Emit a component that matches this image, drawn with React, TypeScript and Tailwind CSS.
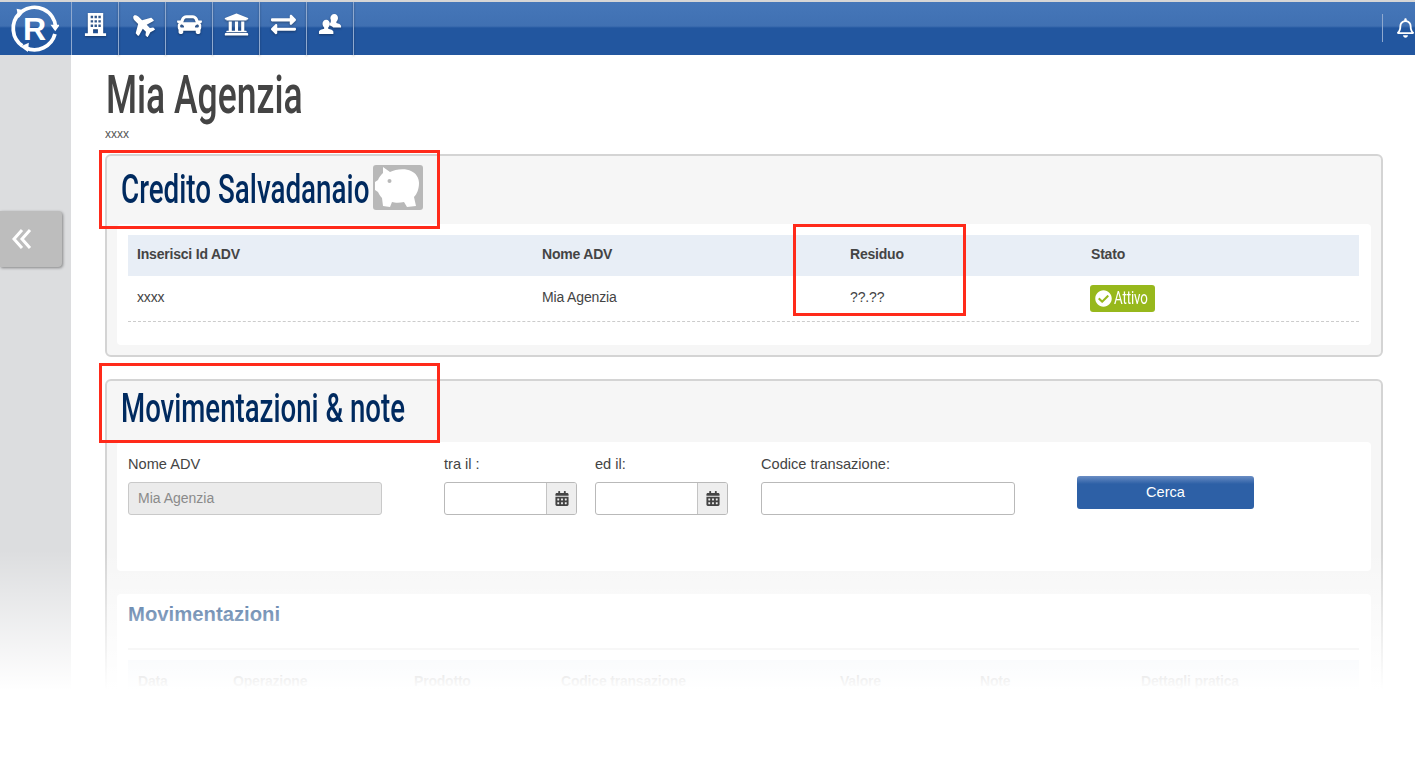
import { FaCalendarAlt, FaCar, FaCheckCircle, FaExchangeAlt, FaPlane, FaRegBell, FaUniversity } from "react-icons/fa";

const headingFont = "font-['Roboto',sans-serif] font-medium whitespace-nowrap inline-block origin-left";

function BuildingIcon() {
  return (
    <svg viewBox="0 0 26 26" className="w-[25px] h-[25px]" fill="currentColor">
      <path fillRule="evenodd" d="M5 1h16v21h3v3H2v-3h3zM8 4v2.500h2.500V4zm4 0v2.500h2.500V4zm4 0v2.500h2.500V4zM8 8.500V11h2.500V8.500zm4 0V11h2.500V8.500zm4 0V11h2.500V8.500zM8 13v2.500h2.500V13zm4 0v2.500h2.500V13zm4 0v2.500h2.500V13zm-5.500 5v4h5v-4z" />
    </svg>
  );
}

function UsersIcon() {
  return (
    <svg viewBox="0 0 26 26" className="w-[25px] h-[25px]" fill="currentColor">
      <path d="M17 2c2.300 0 3.800 1.900 3.800 4.300 0 1.600-.7 3-1.700 3.800v1.300c2 .6 4.900 1.400 4.900 3.100v1.500h-8.200c-.8-1.100-2.300-1.800-3.800-2.300v-1.300c.9-.8 1.400-1.900 1.400-3.300 0-1-.2-1.800-.6-2.600C13 3.700 14.700 2 17 2z" />
      <path d="M8.500 8c2.300 0 3.800 1.900 3.800 4.300 0 1.600-.7 3-1.700 3.800v1.300c2.200.6 5.400 1.400 5.400 3.100V23H1v-2.500c0-1.700 3.200-2.500 5.400-3.100v-1.300c-1-.8-1.700-2.200-1.700-3.800C4.700 9.900 6.200 8 8.500 8z" />
    </svg>
  );
}

function PiggyIcon() {
  return (
    <svg viewBox="0 0 50 45" className="w-[50px] h-[45px]">
      <rect width="50" height="45" rx="3" fill="#b8b8b8" />
      <path
        fill="#fff"
        d="M10 2l7 5c5-3 16-4 21-1 5 2 8 7 8 12 0 6-2 11-5 14l2 9-9 1-3-5c-4 1-9 1-12 0l-2 5-7-1-1-8c-2-2-3-4-4-6l-3-2v-8l3-2c1-3 3-5 5-7z"
      />
      <circle cx="16.500" cy="16" r="2" fill="#b8b8b8" />
    </svg>
  );
}

function Logo() {
  return (
    <svg viewBox="0 0 52 52" className="w-[49px] h-[49px]">
      <g fill="none" stroke="#fff" strokeWidth="4">
        <path d="M13.100 7.600A22.500 22.500 0 0 1 48.400 24" />
        <path d="M47.700 31.800A22.500 22.500 0 0 1 16.500 46.400" />
        <path d="M13.100 44.400A22.500 22.500 0 0 1 10 10" />
      </g>
      <path fill="#fff" d="M43 22h10l-5 7zM20 41l-1 10-8-6zM16 7L7 5l2 10z" />
      <text x="26" y="38" textAnchor="middle" fill="#fff" fontSize="34" fontWeight="700" fontFamily="'Liberation Sans', sans-serif">
        R
      </text>
    </svg>
  );
}

const navItems = [
  <BuildingIcon />,
  <FaPlane className="w-[25px] h-[25px] rotate-[225deg]" />,
  <FaCar className="w-[25px] h-[25px]" />,
  <FaUniversity className="w-[25px] h-[25px]" />,
  <FaExchangeAlt className="w-[25px] h-[25px]" />,
  <UsersIcon />,
];

function DateField() {
  return (
    <div className="flex h-[33px] w-full rounded-[3px] border border-[#b9b9b9] bg-white overflow-hidden">
      <div className="flex-1" />
      <div className="w-[30px] border-l border-[#c4c4c4] bg-[#eeeeee] flex items-center justify-center text-[#444]">
        <FaCalendarAlt className="w-[14px] h-[15px]" />
      </div>
    </div>
  );
}

export default function App() {
  return (
    <div className="relative h-[778px] overflow-hidden bg-white font-['Liberation_Sans',sans-serif] text-[#444]">
      {/* Top bar */}
      <div className="h-[2px] bg-[#d6d6d6]" />
      <header className="flex h-[53px] bg-[linear-gradient(#4577b9_0,#4070b2_24px,#22569f_26px,#22569f_100%)] text-white">
        <div className="w-[72px] flex items-center justify-center pr-[2px] border-r border-[#8fa9cf]">
          <Logo />
        </div>
        {navItems.map((icon, i) => (
          <div key={i} className="w-[47px] flex items-start pt-[10px] justify-center border-r border-[#8fa9cf] drop-shadow-[0_1px_1px_rgba(0,0,0,0.35)]">
            {icon}
          </div>
        ))}
        <div className="flex-1" />
        <div className="w-[33px] mt-[12px] h-[28px] border-l border-[#8fa9cf] pl-[14px] pt-[4px] overflow-hidden">
          <FaRegBell className="w-[17px] h-[20px]" />
        </div>
      </header>

      <div className="flex h-[723px]">
        {/* Sidebar */}
        <aside className="relative w-[71px] shrink-0 bg-[#dcdddf]">
          <button className="absolute left-0 top-[156px] w-[62px] h-[56px] rounded-r-[4px] bg-[#bdbdbd] shadow-[1px_1px_3px_rgba(0,0,0,0.4)] flex items-center pl-[12px] text-white">
            <svg viewBox="0 0 20 20" className="w-[20px] h-[20px]" fill="none" stroke="currentColor" strokeWidth="3">
              <path d="M10 1L2 10l8 9M18 1l-8 9 8 9" />
            </svg>
          </button>
        </aside>

        {/* Main */}
        <main className="flex-1 pl-[34px] pr-[32px]">
          <div className="ml-[1px] mt-[10px] h-[60px]">
            <h1 className={`${headingFont} scale-x-[0.67] text-[53px] leading-[60px] text-[#444]`}>Mia Agenzia</h1>
          </div>
          <div className="mt-[2px] h-[14px] text-[12px] leading-[14px] text-[#555]">xxxx</div>

          <section className="mt-[13px] h-[203px] rounded-[6px] border-2 border-[#d4d4d4] bg-[#f6f6f6] px-[10px]">
            <div className="flex items-center h-[68px] pl-[4px]">
              <div className="w-[252px]">
                <h2 className={`${headingFont} scale-x-[0.695] text-[40px] leading-[44px] text-[#002a5f]`}>Credito Salvadanaio</h2>
              </div>
              <div className="-mt-[6px]">
                <PiggyIcon />
              </div>
            </div>
            <div className="h-[121px] rounded-[4px] bg-white pl-[11px] pr-[12px] pt-[11px]">
              <div className="grid grid-cols-[405px_308px_241px_1fr] items-center h-[41px] pl-[9px] pb-[2px] bg-[#e8eef6] text-[14px] font-bold tracking-[-0.2px]">
                <span>Inserisci Id ADV</span>
                <span>Nome ADV</span>
                <span>Residuo</span>
                <span>Stato</span>
              </div>
              <div className="grid grid-cols-[405px_308px_241px_1fr] items-center h-[46px] pl-[9px] border-b border-dashed border-[#cccccc] text-[14px] tracking-[-0.15px]">
                <span className="-mt-[2px]">xxxx</span>
                <span className="-mt-[2px]">Mia Agenzia</span>
                <span className="-mt-[2px]">??.??</span>
                <span>
                  <span className="inline-flex items-center gap-[2px] h-[27px] w-[65px] -ml-[1px] pl-[5px] rounded-[3px] bg-[#97b81c] text-white overflow-hidden">
                    <FaCheckCircle className="w-[17px] h-[17px] shrink-0" />
                    <span className={`${headingFont} scale-x-[0.7] text-[19px] !font-normal`}>Attivo</span>
                  </span>
                </span>
              </div>
            </div>
          </section>

          <section className="mt-[22px] h-[500px] rounded-[6px] border-2 border-[#d4d4d4] bg-[#f6f6f6] px-[10px]">
            <div className="flex items-center h-[61px] pl-[4px] pb-[6px]">
              <h2 className={`${headingFont} scale-x-[0.69] text-[40px] leading-[44px] text-[#002a5f]`}>Movimentazioni &amp; note</h2>
            </div>
            <div className="h-[129px] rounded-[4px] bg-white pl-[11px] pt-[13px] flex text-[14.6px]">
              <div className="w-[254px]">
                <label className="block h-[27px] leading-[18px]">Nome ADV</label>
                <div className="h-[33px] rounded-[3px] border border-[#c9c9c9] bg-[#ebebeb] pl-[9px] flex items-center text-[14px] text-[#8a8a8a]">Mia Agenzia</div>
              </div>
              <div className="w-[133px] ml-[62px]">
                <label className="block h-[27px] leading-[18px]">tra il :</label>
                <DateField />
              </div>
              <div className="w-[133px] ml-[18px]">
                <label className="block h-[27px] leading-[18px]">ed il:</label>
                <DateField />
              </div>
              <div className="w-[254px] ml-[33px]">
                <label className="block h-[27px] leading-[18px]">Codice transazione:</label>
                <div className="h-[33px] rounded-[3px] border border-[#b9b9b9] bg-white" />
              </div>
              <button className="w-[177px] h-[33px] ml-[62px] mt-[21px] rounded-[3px] bg-[linear-gradient(#6a8dc4_0,#2d60a6_8px,#2d60a6_100%)] text-white flex items-center justify-center pt-[1px]">Cerca</button>
            </div>
            <div className="mt-[23px] h-[300px] rounded-[4px] bg-white pl-[11px] pr-[12px]">
              <h3 className="pt-[8px] h-[54px] text-[20.3px] font-bold leading-[24px] text-[#0d4280]">Movimentazioni</h3>
              <div className="h-[2px] bg-[#e4e4e4]" />
              <div className="mt-[10px] h-[40px] pt-[2px] bg-[#e8eef6] grid grid-cols-[95px_181px_147px_279px_140px_161px_1fr] items-center pl-[10px] text-[14px] font-bold tracking-[-0.2px]">
                <span>Data</span>
                <span>Operazione</span>
                <span>Prodotto</span>
                <span>Codice transazione</span>
                <span>Valore</span>
                <span>Note</span>
                <span>Dettagli pratica</span>
              </div>
            </div>
          </section>
        </main>
      </div>

      {/* Fade-out over the lower part of the page */}
      <div className="absolute left-0 right-0 top-[550px] h-[228px] pointer-events-none bg-[linear-gradient(rgba(255,255,255,0)_0,#fff_140px,#fff_100%)]" />

      {/* Red annotation boxes */}
      <div className="absolute left-[99px] top-[150px] w-[341px] h-[79px] border-[3px] border-[#ff2a1a]" />
      <div className="absolute left-[793px] top-[224px] w-[173px] h-[92px] border-[3px] border-[#ff2a1a]" />
      <div className="absolute left-[99px] top-[363px] w-[341px] h-[80px] border-[3px] border-[#ff2a1a]" />
    </div>
  );
}
